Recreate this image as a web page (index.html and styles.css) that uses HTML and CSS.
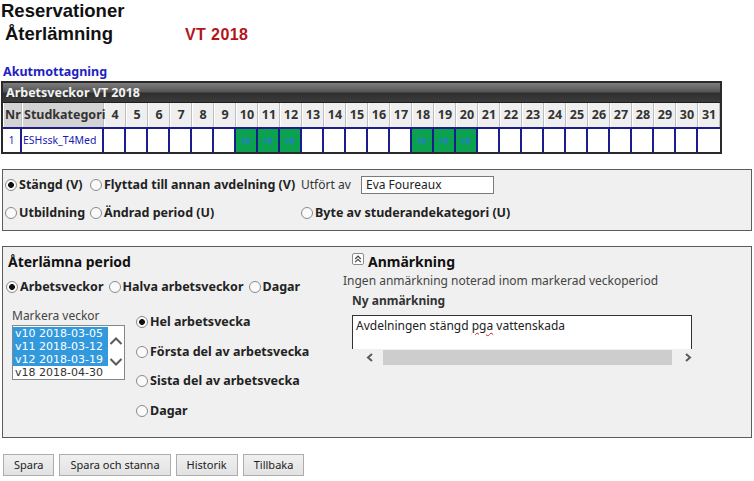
FILE: index.html
```html
<!DOCTYPE html>
<html>

<head>
  <title>Reservationer</title>
  <meta charset="utf-8" />
  <link rel="stylesheet" href="styles.css">
</head>

<body>
  <div class="page">
    <h1 class="title">Reservationer</h1>
    <div class="subhead">
      <h2 class="subtitle">Återlämning</h2>
      <span class="term">VT 2018</span>
    </div>
    <div class="unit">Akutmottagning</div>

    <table class="weeks">
      <colgroup>
        <col class="c-nr" />
        <col class="c-kat" />
        <col class="c-week" span="28" />
      </colgroup>
      <tr class="bar">
        <th colspan="30">Arbetsveckor VT 2018</th>
      </tr>
      <tr class="head">
        <th class="dark">Nr</th>
        <th class="dark">Studkategori</th>
        <th>4</th><th>5</th><th>6</th><th>7</th><th>8</th><th>9</th><th>10</th>
        <th>11</th><th>12</th><th>13</th><th>14</th><th>15</th><th>16</th><th>17</th>
        <th>18</th><th>19</th><th>20</th><th>21</th><th>22</th><th>23</th><th>24</th>
        <th>25</th><th>26</th><th>27</th><th>28</th><th>29</th><th>30</th><th>31</th>
      </tr>
      <tr class="row">
        <td class="nr">1</td>
        <td class="kat">ESHssk_T4Med</td>
        <td></td><td></td><td></td><td></td><td></td><td></td>
        <td class="on">re</td><td class="on">re</td><td class="on">re</td>
        <td></td><td></td><td></td><td></td><td></td>
        <td class="on">re</td><td class="on">re</td><td class="on">re</td>
        <td></td><td></td><td></td><td></td><td></td><td></td><td></td><td></td><td></td><td></td><td></td>
      </tr>
    </table>

    <div class="panel status">
      <label class="opt"><input type="radio" name="orsak" checked>Stängd (V)</label>
      <label class="opt"><input type="radio" name="orsak">Flyttad till annan avdelning (V)</label>
      <div class="by"><span class="by-label">Utfört av</span><input class="field" type="text" value="Eva Foureaux"></div>
      <label class="opt"><input type="radio" name="orsak">Utbildning</label>
      <label class="opt"><input type="radio" name="orsak">Ändrad period (U)</label>
      <label class="opt"><input type="radio" name="orsak">Byte av studerandekategori (U)</label>
    </div>

    <div class="panel period">
      <div class="period-left">
        <h3 class="section">Återlämna period</h3>
        <div class="units">
          <label class="opt"><input type="radio" name="enhet" checked>Arbetsveckor</label>
          <label class="opt"><input type="radio" name="enhet">Halva arbetsveckor</label>
          <label class="opt"><input type="radio" name="enhet">Dagar</label>
        </div>
        <div class="pick">
          <div class="pick-weeks">
            <div class="caption">Markera veckor</div>
            <div class="listbox">
              <ul class="items">
                <li class="sel">v10 2018-03-05</li>
                <li class="sel">v11 2018-03-12</li>
                <li class="sel">v12 2018-03-19</li>
                <li>v18 2018-04-30</li>
              </ul>
              <svg class="vscroll" width="16" height="53" viewBox="0 0 16 53">
                <polyline points="2.5,18 8,12.5 13.5,18" fill="none" stroke="#5a5a5a" stroke-width="2" />
                <polyline points="2.5,33 8,38.5 13.5,33" fill="none" stroke="#5a5a5a" stroke-width="2" />
              </svg>
            </div>
          </div>
          <div class="parts">
            <label class="opt"><input type="radio" name="del" checked>Hel arbetsvecka</label>
            <label class="opt"><input type="radio" name="del">Första del av arbetsvecka</label>
            <label class="opt"><input type="radio" name="del">Sista del av arbetsvecka</label>
            <label class="opt"><input type="radio" name="del">Dagar</label>
          </div>
        </div>
      </div>

      <div class="period-right">
        <h3 class="section indent"><svg class="toggle" width="12" height="12" viewBox="0 0 12 12">
            <rect x="0.5" y="0.5" width="11" height="11" rx="1.5" fill="#fff" stroke="#8c8c8c" />
            <polyline points="3.2,6 6,3.2 8.8,6" fill="none" stroke="#444" stroke-width="1.2" />
            <polyline points="3.2,9.2 6,6.4 8.8,9.2" fill="none" stroke="#444" stroke-width="1.2" />
          </svg>Anmärkning</h3>
        <p class="note">Ingen anmärkning noterad inom markerad veckoperiod</p>
        <div class="label indent">Ny anmärkning</div>
        <div class="memo indent">
          <div class="memo-text">Avdelningen stängd <span class="typo">pga</span> vattenskada</div>
          <div class="hscroll">
            <svg class="arrow-left" width="8" height="9" viewBox="0 0 8 9">
              <polyline points="6,1 2,4.5 6,8" fill="none" stroke="#5a5a5a" stroke-width="2" />
            </svg>
            <span class="thumb"></span>
            <svg class="arrow-right" width="8" height="9" viewBox="0 0 8 9">
              <polyline points="2,1 6,4.5 2,8" fill="none" stroke="#5a5a5a" stroke-width="2" />
            </svg>
          </div>
        </div>
      </div>
    </div>

    <div class="buttons">
      <button class="btn">Spara</button>
      <button class="btn">Spara och stanna</button>
      <button class="btn">Historik</button>
      <button class="btn">Tillbaka</button>
    </div>
  </div>
</body>

</html>
```

FILE: styles.css
```css
body {
  margin: 0;
  background: #fff;
  color: #2a2a2a;
  font-family: "Noto Sans", "DejaVu Sans", sans-serif;
  font-size: 12px;
}
.page {
  padding: 0 2px;
}

/* rubriker */
.title,
.subtitle,
.term {
  font-family: "Liberation Sans", Arial, sans-serif;
}
.title {
  margin: 0 0 0 -1px;
  font-size: 18.5px;
  line-height: 21px;
  color: #111;
}
.subhead {
  display: flex;
  align-items: baseline;
  margin-top: 2.5px;
  padding-left: 3px;
}
.subtitle {
  width: 180px;
  margin: 0;
  font-size: 18.5px;
  line-height: 20px;
  color: #111;
}
.term {
  font-size: 16px;
  line-height: 20px;
  font-weight: bold;
  letter-spacing: 0.4px;
  color: #b3151b;
}
.unit {
  margin: 19px 0 0 1px;
  font-size: 12.5px;
  line-height: 16px;
  font-weight: bold;
  color: #1e1ec4;
}

/* veckotabell */
.weeks {
  width: 721px;
  margin: 1px 0 0 -1px;
  border-collapse: separate;
  border-spacing: 0;
  table-layout: fixed;
  border: 2px solid #2a2a2a;
}
.c-nr {
  width: 19px;
}
.c-kat {
  width: 82px;
}
.c-week {
  width: 22px;
}
.bar th {
  height: 19px;
  padding: 0 3px;
  text-align: left;
  font-size: 12.5px;
  color: #f2f2f2;
  white-space: nowrap;
  border-bottom: 1px solid #1e1e1e;
  background: linear-gradient(#7c7c7c 0%, #565656 45%, #2f2f2f 55%, #3b3b3b 100%);
}
.head th {
  height: 24px;
  padding: 0;
  font-size: 12.5px;
  color: #333;
  background: #efefef;
  border-right: 1px solid #bdbdbd;
  border-left: 1px solid #fff;
}
.head th.dark {
  padding-left: 1px;
  text-align: left;
  background: #d3d3d3;
}
.row td {
  height: 23px;
  padding: 0;
  background: #fff;
  border-top: 2px solid #1c1c8a;
  border-right: 2px solid #1c1c8a;
  text-align: center;
}
.row td:last-child {
  border-right: 0;
}
.row td.nr {
  font-size: 10px;
  color: #1a1ab5;
}
.row td.kat {
  padding-left: 1px;
  text-align: left;
  font-size: 10.5px;
  color: #1a1ab5;
  white-space: nowrap;
}
.row td.on {
  font-size: 10px;
  color: #2f74e8;
  background: #0aa24f;
}

/* paneler */
.panel {
  background: #f0f0f0;
  border: 1px solid #5c5c5c;
}
.opt {
  display: inline-flex;
  align-items: center;
  font-size: 12.5px;
  font-weight: bold;
  line-height: 22px;
  color: #222;
  white-space: nowrap;
}
.opt input {
  -webkit-appearance: none;
  appearance: none;
  width: 12px;
  height: 12px;
  margin: 0 2px 0 0;
  border: 1px solid #8a8a8a;
  border-radius: 50%;
  background: #fafafa;
}
.opt input:checked {
  background: radial-gradient(circle, #111 0 2.6px, #fafafa 3.2px);
}

.status {
  display: grid;
  grid-template-columns: 85px 211px 1fr;
  grid-template-rows: 22px 22px;
  row-gap: 6px;
  margin-top: 15px;
  padding: 4px 2px 6px;
}
.by {
  display: flex;
  align-items: flex-start;
}
.by-label {
  width: 60px;
  line-height: 22px;
  color: #333;
}
.field {
  box-sizing: border-box;
  width: 133px;
  height: 18px;
  margin: 2px 0 0;
  padding: 0 4px;
  border: 1px solid #7a7a7a;
  background: #fff;
  font-family: inherit;
  font-size: 12px;
  color: #222;
}

.period {
  display: flex;
  margin-top: 15px;
  padding: 5px 0 11px 3px;
}
.period-left {
  width: 337px;
}
.period-right {
  flex: 1;
}
.section {
  margin: 0 0 0 2px;
  font-size: 14px;
  line-height: 20px;
  color: #111;
}
.period-right .indent {
  margin-left: 9px;
}
.toggle {
  margin-right: 4px;
  vertical-align: 2px;
}
.units {
  display: flex;
  gap: 5px;
  margin-top: 4px;
}
.pick {
  display: flex;
  gap: 11px;
  margin: 10px 0 0 6px;
}
.caption {
  line-height: 16px;
  color: #444;
}
.listbox {
  display: flex;
  width: 111px;
  margin-top: 1px;
  border: 1px solid #828790;
  background: #fff;
}
.items {
  width: 95px;
  margin: 0;
  padding: 1px 0 0;
  list-style: none;
}
.items li {
  padding-left: 2px;
  font-family: "DejaVu Sans", sans-serif;
  font-size: 11px;
  line-height: 13px;
  color: #333;
  white-space: nowrap;
}
.items li.sel {
  background: #3399dd;
  color: #fff;
}
.parts {
  display: flex;
  flex-direction: column;
}
.parts .opt {
  height: 29.5px;
}

.note {
  margin: 1px 0 0;
  line-height: 16px;
  color: #444;
}
.label {
  margin-top: 4px;
  font-weight: bold;
  line-height: 16px;
  color: #333;
}
.memo {
  width: 340px;
  margin-top: 6px;
}
.memo-text {
  box-sizing: border-box;
  height: 34px;
  padding: 2px 3px 0;
  border: 1px solid #333;
  border-bottom: 0;
  background: #fff;
  line-height: 16px;
  color: #222;
}
.typo {
  text-decoration: underline wavy #d42020;
  text-decoration-thickness: 1px;
  text-underline-offset: 2px;
}
.hscroll {
  display: flex;
  align-items: center;
  height: 17px;
  background: #f0f0f0;
}
.arrow-left {
  margin: 0 9px 0 14px;
}
.thumb {
  width: 289px;
  height: 15px;
  background: #cdcdcd;
}
.arrow-right {
  margin-left: 12px;
}

/* knappar */
.buttons {
  display: flex;
  gap: 5px;
  margin: 16px 0 0 1px;
}
.btn {
  height: 22px;
  padding: 0 10px;
  border: 1px solid #adadad;
  background: linear-gradient(#f0f0f0, #e2e2e2);
  font-family: inherit;
  font-size: 11px;
  color: #222;
}
```
